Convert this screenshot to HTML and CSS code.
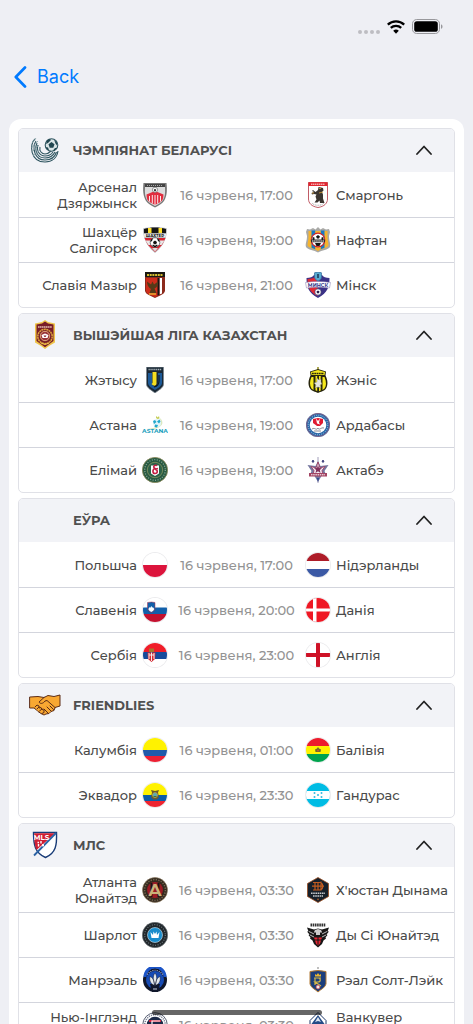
FILE: index.html
```html
<!DOCTYPE html>
<html lang="be">
<head>
  <meta charset="UTF-8">
  <meta name="viewport" content="width=device-width, initial-scale=1.0">
  <title>Матчы</title>
  <link rel="stylesheet" href="styles.css">
</head>
<body>

<div class="screen">

  <!-- Status bar -->
  <div class="status-bar">
    <svg width="22" height="4" viewBox="0 0 22 4" fill="#bdbdc2"><circle cx="2" cy="2" r="2"/><circle cx="8" cy="2" r="2"/><circle cx="14" cy="2" r="2"/><circle cx="20" cy="2" r="2"/></svg>
    <svg class="wifi" width="18" height="14" viewBox="0 0 18 14" fill="none" stroke="#000" stroke-width="2.3"><path d="M.8 4.7a11.8 11.8 0 0 1 16.4 0"/><path d="M3.8 7.9a7.5 7.5 0 0 1 10.4 0"/><path d="M9 13.7 6.2 10.8a4 4 0 0 1 5.6 0z" fill="#000" stroke="none"/></svg>
    <svg width="31" height="15" viewBox="0 0 31 15"><rect x=".5" y=".5" width="27" height="14" rx="4.2" fill="none" stroke="#98989c"/><rect x="2.2" y="2.2" width="23.6" height="10.6" rx="2.6"/><path d="M29 5.2c2 .8 2 3.8 0 4.6z" fill="#98989c"/></svg>
  </div>

  <nav class="nav-bar">
    <a class="back" href="#">
      <svg width="13" height="22" viewBox="0 0 13 22" fill="none" stroke="#007aff" stroke-width="2.7" stroke-linecap="round" stroke-linejoin="round"><path d="M11 1.5 1.8 11 11 20.5"/></svg>
      Back
    </a>
  </nav>

  <main class="leagues">

    <!-- Беларусь -->
    <section class="league">
      <button class="league-header" type="button">
        <svg class="league-logo" viewBox="0 0 32 32" fill="none" stroke="#2f5560">
          <path d="M6 5C0 10 1 28 16 28c7 0 12-4 13-11" stroke-width="1.1"/>
          <path d="M7 7C3 13 5 26 16 26c6 0 10-3 11.500-8" stroke-width="1.1"/>
          <path d="M8 9c-3 7 0 15 8 15 5 0 8-2 10-6" stroke-width="1.1"/>
          <path d="M9 11c-2 6 2 11 7 11 4 0 6-1 8-4" stroke-width="1.1"/>
          <path d="M11 13c-1 4 2 7 5 7 3 0 4-1 6-3" stroke-width="1.1"/>
          <path d="M3 9 7 4M2.500 14 9 7M3 18l7-7M4 22l7-6" stroke="#7f9ba1" stroke-width=".8"/>
          <circle cx="22.500" cy="11" r="6.300" fill="#d9e4e6" stroke-width="1.1"/>
          <path d="m22.500 8 3 2.200-1.200 3.500h-3.600l-1.200-3.500zM18 6l3-1 1 1-3 3-2 1zM25 5.500l3 3v3l-1.500-2zM17 13l2 .5 1 2.500-2-.5zM26 14l2 0-3 3-1-.5z" fill="#214650" stroke="none"/>
        </svg>
        <span class="league-name">ЧЭМПІЯНАТ БЕЛАРУСІ</span>
        <svg class="chevron" viewBox="0 0 16 10"><path d="M1 9l7-7.500L15 9"/></svg>
      </button>
      <ul class="matches">
        <li class="match">
          <span class="home">Арсенал Дзяржынск</span>
          <svg class="badge" viewBox="0 0 26 26"><path d="M1.500 1h23c.8 7 .5 13-2.500 18-2 3-6 5-9 6.500C10 24 6 22 4 19 1 14 .7 8 1.500 1z" fill="#777"/><path d="M3 5h20c.3 6 0 10-2 13-2 3-5 4.500-8 6-3-1.500-6-3-8-6-2-3-2.300-7-2-13z" fill="#ddd"/><path d="M3 2h20v3H3z" fill="#444"/><path d="M5 3.500h16" stroke="#aaa" stroke-width="1" stroke-dasharray="1 1"/><path d="M4.500 12.500 13 9l8.500 3.500c0 4-1 6-3 7.500L13 23l-5.500-3c-2-1.500-3-3.500-3-7.500z" fill="#e12d3e"/><path d="M7.500 14v5.500M10.300 13v8.500M13 13v10M15.700 13v8.500M18.500 14v5.500" stroke="#fff" stroke-width=".9"/><circle cx="13" cy="7.800" r="2.600" fill="#fff" stroke="#555" stroke-width=".6"/><path d="m13 6.800 1.200.9-.5 1.500h-1.400l-.5-1.500z" fill="#333"/></svg>
          <time class="kickoff">16 чэрвеня, 17:00</time>
          <svg class="badge" viewBox="0 0 26 26"><path d="M3.500.5h19V17c0 4-3 7.500-9.500 8.500C6.500 24.500 3.500 21 3.500 17z" fill="#fff" stroke="#b94a55" stroke-width=".9"/><path d="M3.500.3h19V4h-19z" fill="#e2262f"/><path d="M6 2.200h14" stroke="#fff" stroke-width=".9" stroke-dasharray="1.500 .5"/><path d="m13 8 .5-3 2.500.5 2 .5.500 2.500-1.500 1.500 1 2.500 0 4 1.500 4.500H15l-.5-2.500-2 2H9.500l2-3-1-3 1-2-2.500-.5-2 .5-.5-1.500 2.500-1L7 9l1-1 2.500 2z" fill="#3a3530"/><path d="M14 6.500h2M14 11l4-1M7 11h2" stroke="#d8a23a" stroke-width=".8"/><path d="M7 21c2 3 10 3 12 0" stroke="#aaa" fill="none" stroke-dasharray="1 .7"/></svg>
          <span class="away">Смаргонь</span>
        </li>
        <li class="match">
          <span class="home">Шахцёр Салігорск</span>
          <svg class="badge" viewBox="0 0 26 26"><path d="M1 1.500C8-.5 18-.5 25 1.500 25 9 23 18 13 26 3 18 1 9 1 1.500z" fill="#bcbec2"/><path d="M2 2C9 0 17 0 24 2v4.500H2z" fill="#161616"/><path d="M6 1h3.500v5H6zM16.500 1H20v5h-3.500z" fill="#ffe22d"/><path d="M2 6.500h22l-.5 3.500h-21z" fill="#f4f4f4"/><text x="13" y="9.700" font-size="4" font-weight="700" text-anchor="middle">ШАХТЕР</text><path d="M2.500 11h21L20 18l-7 7-7-7z" fill="#d8232f"/><path d="M3.500 13.500h19L19.500 18h-13z" fill="#e9e9e9"/><circle cx="13" cy="15.500" r="4.800" fill="#fff" stroke="#222" stroke-width=".6"/><path d="m13 13.500 2 1.500-.8 2.200h-2.400L11 15zM9 12.500l2-1-1 2.500-1.500 1zM17 12.500l-2-1 1 2.500 1.500 1zM10 18l2 2h2l2-2-1.500-.2-1.500 1-1.500-1z" fill="#111"/><path d="M10 21h6l-3 3.500z" fill="#ddd"/></svg>
          <time class="kickoff">16 чэрвеня, 19:00</time>
          <svg class="badge" viewBox="0 0 26 26"><path d="M2 2l3 .5L8 1l2.500 1.500L13 0l2.500 2.500L18 1l3 1.500 3-.5 1 3-1 4c0 5 2 8 1 11-2 3-8 3-12 5.500C9 23 3 23 1 20c-1-3 1-6 1-11L1 5z" fill="#a9a9a6"/><path d="M3.500 4h19v6c0 4 1.500 7 .8 9-2 2.500-7 2.500-10.300 5-3.300-2.500-8.300-2.500-10.300-5C2 17 3.500 14 3.500 10z" fill="#f6b42d"/><path d="M6.500 3.500h3.700v18.700l-3.700-1.500zM15.800 3.500h3.700v17.200l-3.700 1.500z" fill="#1879c4"/><circle cx="13" cy="13" r="6.800" fill="#fff" stroke="#cf252d" stroke-width="1.200"/><path d="m13 8 2 1.500-1 2h-2l-1-2zM7.500 10l2 .5v3h-2zM18.500 10l-2 .5v3h2zM10 16h6l-1.500 3h-3z" fill="#161616"/><path d="M6 12.500h14v2.800H6z" fill="#2d2929"/><path d="M7 14h12" stroke="#fff" stroke-dasharray="1.500 .6"/></svg>
          <span class="away">Нафтан</span>
        </li>
        <li class="match">
          <span class="home">Славія Мазыр</span>
          <svg class="badge" viewBox="0 0 26 26"><path d="M3 0h20v19c-1 4-6 4.500-10 7-4-2.500-9-3-10-7z" fill="#8c2a1c"/><path d="M3 0h20v5H3z" fill="#1b1812"/><path d="M5 3h16" stroke="#d5bd2e" stroke-width="2" stroke-dasharray="2 .7"/><path d="M4 6h14v17l-5 2c-4-2-8-2.500-9-6z" fill="#ce2d1b"/><path d="M17.500 6H20v15.500l-2.500 1z" fill="#fff"/><path d="M15.500 6h2v17l-2 .8z" fill="#151515"/><path d="M5 9.500l4 3 1.500-3 1.500 3 4-3c0 4-1 6-3.500 7l2 4.500H7.500l1.500-4c-2.500-1.500-4-4-4-7.500z" fill="#553a18"/><path d="M7 22h7" stroke="#e8ad31" stroke-width="1.500"/></svg>
          <time class="kickoff">16 чэрвеня, 21:00</time>
          <svg class="badge" viewBox="0 0 26 26"><path d="M1.500 6C5 6 8 5 9 3h8c1 2 4 3 7.500 3 0 9-2 15-11.500 20C3.500 21 1.500 15 1.500 6z" fill="#3b3287"/><path d="M2.500 7C6 7 9 6 12.500 4v20C4.500 20 2.500 15 2.500 7z" fill="#e02a35"/><path d="M9.500.8Q13-1 16.500.8V5c0 2-2 3.500-3.500 4-1.500-.5-3.500-2-3.500-4z" fill="#58aad0" stroke="#356b9b" stroke-width=".7"/><path d="M12 2h2v4h-2z" fill="#275275"/><path d="M.5 10.500c8-1.500 17-1.500 25 0l-1 5.500c-7-1-16-1-23 0z" fill="#fff" stroke="#8278ac" stroke-width=".5"/><text x="13" y="15" font-size="5" font-weight="700" text-anchor="middle" fill="#34398b">МИНСК</text><circle cx="13" cy="20" r="3.200" fill="#fff" stroke="#25204f" stroke-width=".6"/><path d="m13 18.500 1.500 1-.5 1.700h-2l-.5-1.700z" fill="#25204f"/></svg>
          <span class="away">Мінск</span>
        </li>
      </ul>
    </section>

    <!-- Казахстан -->
    <section class="league">
      <button class="league-header" type="button">
        <svg class="league-logo" viewBox="0 0 32 32"><path d="M16 1l3 2 7 1.500v19L20 27l-4 3-4-3-6-3.500v-19L13 3z" fill="#efc54a"/><path d="M16 2.500 19 4.500l5.500 1V22L19 26l-3 2.300L13 26l-5.500-4V5.500l5.500-1z" fill="#781d28"/><path d="M9 8h14" stroke="#e4bcb0" stroke-width="1.500" stroke-dasharray="1.500 .4"/><circle cx="16" cy="17.500" r="7.200" fill="none" stroke="#dfa83c" stroke-width="1.500" stroke-dasharray="2 .5"/><circle cx="16" cy="17" r="4.700" fill="#98343a" stroke="#f3c58a" stroke-width=".8"/><path d="m12.500 16 3.500-1.500 3.500 1.500-1 3h-5z" fill="#fff"/><path d="M14.500 16.500h3l-1 1.500h-1z" fill="#8b2630"/><path d="M12 24q4 3 8 0" fill="none" stroke="#efc54a"/></svg>
        <span class="league-name">ВЫШЭЙШАЯ ЛІГА КАЗАХСТАН</span>
        <svg class="chevron" viewBox="0 0 16 10"><path d="M1 9l7-7.500L15 9"/></svg>
      </button>
      <ul class="matches">
        <li class="match">
          <span class="home">Жэтысу</span>
          <svg class="badge" viewBox="0 0 26 26"><path d="M4.500 0h17v17c0 4-5 6-8.500 9-3.500-3-8.500-5-8.500-9z" fill="#192835" stroke="#7c8790" stroke-width=".8"/><path d="M6.500 2.500h13" stroke="#a8b2b8" stroke-width="1.600" stroke-dasharray="1.300 .6"/><path d="M6 6h4v9c0 6 6 6 6 0V6h4v10c0 3-4 5-7 7-3-2-7-4-7-7z" fill="#1c5a98"/><path d="M10.500 5h4v12c-1 2.500-3 2-5 0l1-1z" fill="#f3df21"/><path d="M12 20c4-1 5-3 5-6V8" fill="none" stroke="#0d1922" stroke-width="1.200"/></svg>
          <time class="kickoff">16 чэрвеня, 17:00</time>
          <svg class="badge" viewBox="0 0 26 26"><path d="M13 0v3" stroke="#a7a144" stroke-width="1.800"/><path d="M5 4.500 13 2l8 2.500-.5 4c2 4 3 9 .5 13-2 3-5 3-8 4.500-3-1.500-6-1.500-8-4.500-2.500-4-1.500-9 .5-13z" fill="#28260d"/><path d="M6 5l7-2 7 2-.5 3h-13z" fill="#f6e91d"/><path d="M7 6.500h12" stroke="#29260a" stroke-width="1.500" stroke-dasharray="1.800 .5"/><path d="M6.500 10h2v13l-2-1.500c-2-3-2-7 0-11.500zM10.500 9h1.700v15l-1.700-.7zM14 9h1.700v14.500l-1.700.7zM17.500 10h2c2 5 2 9 0 11.500l-2 1.500z" fill="#f6e91d"/><path d="m12 11 2 2 2-1 0 3 1 2-2 1 1 3-3-1-3 1 1-3-2-2 3-1z" fill="#e5e5df" stroke="#77755f" stroke-width=".4"/></svg>
          <span class="away">Жэніс</span>
        </li>
        <li class="match">
          <span class="home">Астана</span>
          <svg class="badge" viewBox="0 0 26 26"><path d="m14 6 .3-2 1.500 1.500L17 4l.5 2.500-2 .5z" fill="#c4cc54"/><path d="M18 6c5 5 2 9-6 11H5c9-1 15-3 13-11z" fill="#dae8bf"/><circle cx="15" cy="11" r="4" fill="#e1f5fa"/><path d="m11 9 2-1 1.500 2L12 12zM15 9.500l2.500-2 1 2-1.500 2zM13 12.500l3 .5-1 2.500-2.500-.5z" fill="#22a8cc"/><text x="13" y="21" font-size="6" font-weight="700" text-anchor="middle" fill="#1ba0bd">ASTANA</text></svg>
          <time class="kickoff">16 чэрвеня, 19:00</time>
          <svg class="badge" viewBox="0 0 26 26"><circle cx="13" cy="13" r="12" fill="#2767a8"/><circle cx="13" cy="13" r="11.500" fill="none" stroke="#c05c70" stroke-width=".6"/><circle cx="13" cy="13" r="9.800" fill="none" stroke="#b4cbe4" stroke-width="1" stroke-dasharray="1 1.200"/><circle cx="13" cy="13" r="8.300" fill="#fff"/><path d="m8 7 5-1 5 1 0 4-3 3h-3l-4-3z" fill="#df1c33"/><path d="m11 6.500 2 2.500 2-2.500-1 4 1 2-3-1z" fill="#fff"/><path d="M7 17c3-2 4 2 6-1 1 3 3-1 6 0M9 19h7" stroke="#6d707e" stroke-width=".8" fill="none"/></svg>
          <span class="away">Ардабасы</span>
        </li>
        <li class="match">
          <span class="home">Елімай</span>
          <svg class="badge" viewBox="0 0 26 26"><circle cx="13" cy="13" r="12.600" fill="#285a42" stroke="#8a8755" stroke-width=".8"/><circle cx="13" cy="13" r="10.300" fill="none" stroke="#8aa893" stroke-width="1.300" stroke-dasharray="1 1.500"/><circle cx="13" cy="13" r="7.700" fill="#2c6248" stroke="#a9a66b" stroke-width=".6"/><path d="M9 8.500h8v8l-4 2.500-4-2.500z" fill="#fff"/><path d="M15 8.500c-3-1-4.500 1.500-2 3-3 1-2.500 5 0 5 3 0 3-4 0-4l3-1" fill="none" stroke="#c41f42" stroke-width="1.600"/></svg>
          <time class="kickoff">16 чэрвеня, 19:00</time>
          <svg class="badge" viewBox="0 0 26 26"><path d="M13 0v26" stroke="#8b87a8" stroke-width=".8"/><path d="m13 4 2.500 5 8-1-4 6 2 5-5 0-3.500 6-3.500-6-5 0 2-5-4-6 8 1z" fill="#75779f"/><path d="m13 5 2 6 5-1.500-3 4 1 5H8l1-5-3-4L11 11z" fill="#f3edf3" stroke="#9b3459" stroke-width=".8"/><path d="m13 8 1 3 3 .3-2.200 1.700.7 3-2.500-1.700-2.500 1.700.7-3L9 11.300l3-.3z" fill="#82305a"/><path d="M4 16h18v3.500H4z" fill="#a34463"/><path d="M6 17.800h14" stroke="#fff" stroke-dasharray="1.500 .7"/><path d="m8 3 1 2-2 0zM18 3l1 2-2 0z" fill="#40437e" stroke="#40437e"/><path d="M12 21h2l-1 4z" fill="#284590"/></svg>
          <span class="away">Актабэ</span>
        </li>
      </ul>
    </section>

    <!-- Еўра -->
    <section class="league">
      <button class="league-header" type="button">
        <span class="league-logo"></span>
        <span class="league-name">ЕЎРА</span>
        <svg class="chevron" viewBox="0 0 16 10"><path d="M1 9l7-7.500L15 9"/></svg>
      </button>
      <ul class="matches">
        <li class="match">
          <span class="home">Польшча</span>
          <svg class="badge flag" viewBox="0 0 24 24"><path d="M0 0h24v12H0z" fill="#fff"/><path d="M0 12h24v12H0z" fill="#dc143c"/></svg>
          <time class="kickoff">16 чэрвеня, 17:00</time>
          <svg class="badge flag" viewBox="0 0 24 24"><path d="M0 0h24v8H0z" fill="#ae1c28"/><path d="M0 8h24v8H0z" fill="#fff"/><path d="M0 16h24v8H0z" fill="#3b59a5"/></svg>
          <span class="away">Нідэрланды</span>
        </li>
        <li class="match">
          <span class="home">Славенія</span>
          <svg class="badge flag" viewBox="0 0 24 24"><path d="M0 0h24v9.500H0z" fill="#fff"/><path d="M0 9.500h24V16H0z" fill="#1260aa"/><path d="M0 16h24v8H0z" fill="#c4112f"/><path d="M4.500 4.500q4-1 7.500 0v6c0 2-2 3.500-3.700 4-1.800-.5-3.800-2-3.800-4z" fill="#1260aa" stroke="#b5304b" stroke-width=".5"/><path d="m5.300 11 1.500-2 .7.800.8-2 .8 2 .7-.8 1.500 2c-.5 1.500-2 2.500-3 3-1-.5-2.500-1.500-3-3z" fill="#fff"/></svg>
          <time class="kickoff">16 чэрвеня, 20:00</time>
          <svg class="badge flag" viewBox="0 0 24 24"><path d="M0 0h24v24H0z" fill="#ef1824"/><path d="M7 0h3.500v24H7zM0 10.500h24v3H0z" fill="#fff"/></svg>
          <span class="away">Данія</span>
        </li>
        <li class="match">
          <span class="home">Сербія</span>
          <svg class="badge flag" viewBox="0 0 24 24"><path d="M0 0h24v9H0z" fill="#f01d29"/><path d="M0 9h24v7H0z" fill="#174b9b"/><path d="M0 16h24v8H0z" fill="#fff"/><path d="M6 5.500h5V9H6z" fill="#a5772e"/><path d="M4.500 9.500h8l-.5 6.500-3.500 3-3.500-3z" fill="#d62932"/><path d="M6 10v6M8.500 9.500V18M11 10v6M6 12h5" stroke="#eee" stroke-width="1"/></svg>
          <time class="kickoff">16 чэрвеня, 23:00</time>
          <svg class="badge flag" viewBox="0 0 24 24"><path d="M0 0h24v24H0z" fill="#fff"/><path d="M10 0h4v24h-4zM0 10h24v4H0z" fill="#ce1126"/></svg>
          <span class="away">Англія</span>
        </li>
      </ul>
    </section>

    <!-- Таварыскія -->
    <section class="league">
      <button class="league-header" type="button">
        <svg class="league-logo" viewBox="0 0 32 32" stroke="#5c2c16" stroke-width="1" stroke-linejoin="round" stroke-linecap="round"><path d="M1 8l8-.5 6 1 4-2 6 1 6-1.500v11l-5 1.500-1 3-3 1-2 2-3 .5-2 1-3-1.500-3-2-2-2-2-1.500H1z" fill="#f9a832"/><path d="M15 8.500 10 13c1 2 4 2 6-1l2-.5 8 7M21 17l3.500 3.500M18 18l4 4M15 20l4 4M6 18l2-2 2 1 0 2 2-.5 1 2 2 .5 0 2.500-2 1M8 20l2-2M10.500 22 13 20" fill="none"/></svg>
        <span class="league-name">FRIENDLIES</span>
        <svg class="chevron" viewBox="0 0 16 10"><path d="M1 9l7-7.500L15 9"/></svg>
      </button>
      <ul class="matches">
        <li class="match">
          <span class="home">Калумбія</span>
          <svg class="badge flag" viewBox="0 0 24 24"><path d="M0 0h24v12H0z" fill="#fff200"/><path d="M0 12h24v6H0z" fill="#205aaa"/><path d="M0 18h24v6H0z" fill="#ec2033"/></svg>
          <time class="kickoff">16 чэрвеня, 01:00</time>
          <svg class="badge flag" viewBox="0 0 24 24"><path d="M0 0h24v8H0z" fill="#ed1c2c"/><path d="M0 8h24v8H0z" fill="#fff200"/><path d="M0 16h24v8H0z" fill="#00a34d"/><path d="m12 9 1 1.500 2 1-.5 2.500h-5L9 11.500l2-1z" fill="#6d6b2b"/><circle cx="12" cy="12.500" r="1" fill="#c35a31"/></svg>
          <span class="away">Балівія</span>
        </li>
        <li class="match">
          <span class="home">Эквадор</span>
          <svg class="badge flag" viewBox="0 0 24 24"><path d="M0 0h24v12H0z" fill="#fff200"/><path d="M0 12h24v6H0z" fill="#0b5ca8"/><path d="M0 18h24v6H0z" fill="#ee2430"/><path d="m8 7 4 1 4-1-1 2.500 1 4.500-2 2.500h-4L8 14l1-4.500z" fill="#6b5a2d"/><circle cx="12" cy="12" r="2.500" fill="#59a9b6" stroke="#d8b338" stroke-width=".6"/><path d="M10.500 13.500h3" stroke="#39763c"/></svg>
          <time class="kickoff">16 чэрвеня, 23:30</time>
          <svg class="badge flag" viewBox="0 0 24 24"><path d="M0 0h24v24H0z" fill="#00bce4"/><path d="M0 8h24v8H0z" fill="#fff"/><g fill="#31bce0"><circle cx="12" cy="12" r="1"/><circle cx="8.500" cy="10" r="1"/><circle cx="15.500" cy="10" r="1"/><circle cx="8.500" cy="14" r="1"/><circle cx="15.500" cy="14" r="1"/></g></svg>
          <span class="away">Гандурас</span>
        </li>
      </ul>
    </section>

    <!-- МЛС -->
    <section class="league">
      <button class="league-header" type="button">
        <svg class="league-logo" viewBox="0 0 32 32"><path d="M4.500 3.500h23C28 16 27 24 16.500 28.500 6 24 4.500 16 4.500 3.500z" fill="#fff" stroke="#183b77" stroke-width="1.400"/><path d="M5.200 4.200h21L7.500 21C5.500 17 5.200 11 5.200 4.200z" fill="#cf1f34"/><path d="M27 4 5 26.500" stroke="#2a62a5" stroke-width="1.800"/><text x="12.500" y="10.500" font-size="7" font-weight="700" text-anchor="middle" fill="#fff">MLS</text><path d="M12 12v2.500M9.500 15v2.500M14 15v2.500M8.500 13.500h1.500M13 16.200h2" stroke="#fff" stroke-width="1.400"/></svg>
        <span class="league-name">МЛС</span>
        <svg class="chevron" viewBox="0 0 16 10"><path d="M1 9l7-7.500L15 9"/></svg>
      </button>
      <ul class="matches">
        <li class="match">
          <span class="home">Атланта Юнайтэд</span>
          <svg class="badge" viewBox="0 0 26 26"><circle cx="13" cy="13" r="12.500" fill="#33291f" stroke="#8d795a" stroke-width=".6"/><circle cx="13" cy="13" r="10.400" fill="none" stroke="#75664f" stroke-width="1.500" stroke-dasharray="1.300 1.300"/><circle cx="13" cy="13" r="8" fill="#9c1b25"/><path d="M9.500 6v14M16.500 6v14" stroke="#181515" stroke-width="2"/><text x="13" y="19" font-size="17" font-weight="700" text-anchor="middle" fill="#c9b07a">A</text></svg>
          <time class="kickoff">16 чэрвеня, 03:30</time>
          <svg class="badge" viewBox="0 0 26 26"><path d="m13 .5 10.500 6v13L13 25.500l-10.500-6v-13z" fill="#17202a" stroke="#9b4d20" stroke-width=".8"/><path d="M8 5.500h6c5 0 5 7.500 0 7.500H8M10 5v8M13 5v8M7 9.200h12M16 4.500v9" fill="none" stroke="#c35c20" stroke-width="1.200"/><path d="M6 16.300h14M8 19h10" stroke="#c5c9cd" stroke-width="1.400" stroke-dasharray="1.600 .6"/><path d="m13 21 .7 1.500-.7 1-.7-1z" fill="#e0702c"/></svg>
          <span class="away">Х'юстан Дынама</span>
        </li>
        <li class="match">
          <span class="home">Шарлот</span>
          <svg class="badge" viewBox="0 0 26 26"><circle cx="13" cy="13" r="12.700" fill="#20262a" stroke="#737b80" stroke-width=".6"/><circle cx="13" cy="13" r="10.300" fill="none" stroke="#6d777d" stroke-width="1.200" stroke-dasharray="1 1.500"/><circle cx="13" cy="13" r="7.500" fill="#1b8dcc" stroke="#d8eaf3" stroke-width=".6"/><path d="m8.500 10 2.500 3 .5-3.500 1.500 2.500 1.500-2.500.5 3.500 2.500-3-1 6h-7z" fill="#fff"/></svg>
          <time class="kickoff">16 чэрвеня, 03:30</time>
          <svg class="badge" viewBox="0 0 26 26"><path d="M5.500 3h15" stroke="#333" stroke-width="3" stroke-dasharray="1.600 .6"/><path d="m2 5.500 7 2 4-1 4 1 7-2-1.500 4 1.500 0-2.500 3 1 .5-2 2.500.5 1-2.500 2L17 22l-4 3.500L9 22l-1.500-3.500-2.500-2 .5-1-2-2.500 1-.5L2 9.500l1.500 0z" fill="#171717"/><path d="m10 8 3-1 3 1 1 2-1 1-1-1v3h-4v-3l-1 1-1-1z" fill="#ccc"/><path d="M4 9.500 9 12M5 13l4 2M22 9.500 17 12M21 13l-4 2" stroke="#fff" stroke-width=".7"/><path d="M9 15.500h8l-1 3-1 3-2 2.500-2-2.500-1-3z" fill="#e52834"/><path d="M8 18h10M13 15v9" stroke="#171717"/></svg>
          <span class="away">Ды Сі Юнайтэд</span>
        </li>
        <li class="match">
          <span class="home">Манрэаль</span>
          <svg class="badge" viewBox="0 0 26 26"><circle cx="13" cy="13" r="12" fill="#10172b"/><circle cx="13" cy="13" r="9" fill="#164bb5"/><path d="M3 10a10 10 0 0 1 20 0" fill="none" stroke="#1c55c8" stroke-width="3"/><path d="M5 7.500Q13-1 21 7.500" fill="none" stroke="#a7b6e0" stroke-width="1.200" stroke-dasharray="1 1.200"/><path d="M8 17h10l-2 8h-6z" fill="#10172b"/><path d="M13 6c2.500 3.500 2 7 0 12-2-5-2.500-8.500 0-12zM8 9.500c2.500 1 4 3 4.500 9C9 17 7 14 8 9.500zM18 9.500c-2.500 1-4 3-4.500 9C17 17 19 14 18 9.500z" fill="#e4e9ed" stroke="#10172b" stroke-width=".5"/><path d="M11 22h4" stroke="#c4cbda" stroke-width="1.200"/></svg>
          <time class="kickoff">16 чэрвеня, 03:30</time>
          <svg class="badge" viewBox="0 0 26 26"><circle cx="13" cy="1" r="1" fill="#aaa"/><path d="M5 4.500q8-2 16 0V17c-1 4-5 5-8 8-3-3-7-4-8-8z" fill="#1b3e7c" stroke="#b37b34" stroke-width="1"/><path d="M10 7l1.500 1L13 6l1.500 2L16 7v2.500h-6z" fill="#e8b534"/><path d="M10 18v-7h3c3 0 3 4 0 4h-3l6 4M9 11l7 0" fill="none" stroke="#d2b648" stroke-width="1.200"/><circle cx="13" cy="20" r="2" fill="#f3e9e6" stroke="#bd3444" stroke-width=".7"/></svg>
          <span class="away">Рэал Солт-Лэйк</span>
        </li>
        <li class="match">
          <span class="home">Нью-Інглэнд Рэвалюшн</span>
          <svg class="badge" viewBox="0 0 26 26"><circle cx="13" cy="13" r="12.300" fill="#fff" stroke="#303950" stroke-width=".8"/><circle cx="13" cy="13" r="10.300" fill="none" stroke="#777e93" stroke-width="1.500" stroke-dasharray="1.200 1"/><circle cx="13" cy="13" r="8.300" fill="#1b2948"/><path d="M7 9h12M7 13h12" stroke="#ce253f" stroke-width="2"/><path d="M10 18V9l8 0M11 13h5" stroke="#fff" stroke-width="1.200" fill="none"/></svg>
          <time class="kickoff">16 чэрвеня, 03:30</time>
          <svg class="badge" viewBox="0 0 26 26"><path d="m13 .5 8 8v11L13 25.500l-8-6v-11z" fill="#fff" stroke="#1a3567"/><path d="m13 3 8 11v4l-4-5-4 6-4-6-4 5v-4z" fill="#244b87"/><path d="m13 5 3 5-3-1-3 1z" fill="#dce5f0"/></svg>
          <span class="away">Ванкувер Уайткэпс</span>
        </li>
      </ul>
    </section>

  </main>

  <div class="home-indicator"></div>
</div>

</body>
</html>
```
FILE: styles.css
```css
* {
  box-sizing: border-box;
}

body {
  margin: 0;
  background: #eeeff4;
  color: #4a4a4a;
  font-family: Montserrat, Inter, "Noto Sans", sans-serif;
}

.screen {
  position: relative;
  height: 100vh;
  overflow: hidden;
}

.status-bar {
  display: flex;
  justify-content: flex-end;
  align-items: flex-end;
  height: 34px;
  padding-right: 30px;
}

.status-bar .wifi {
  margin: 0 7px;
}

.nav-bar {
  display: flex;
  align-items: center;
  height: 85px;
  padding-left: 14px;
}

.back {
  display: flex;
  align-items: center;
  gap: 10px;
  color: #007aff;
  font-family: Inter, sans-serif;
  font-size: 18px;
  line-height: 22px;
  text-decoration: none;
}

.leagues {
  display: flex;
  flex-direction: column;
  gap: 5px;
  margin: 0 9px;
  padding: 9px;
  background: #fff;
  border-radius: 12px;
}

.league {
  border: 1px solid #e0e1e7;
  border-radius: 5px;
  overflow: hidden;
}

.league-header {
  display: flex;
  align-items: center;
  width: 100%;
  height: 43px;
  padding: 0 22px 2px 10px;
  background: #f2f3f7;
  border: 0;
  color: #505050;
  font: inherit;
  cursor: pointer;
}

.league-logo {
  width: 32px;
  height: 32px;
}

.league-name {
  flex: 1;
  margin-left: 12px;
  font-size: 13px;
  font-weight: 700;
  line-height: 18px;
  text-align: left;
}

.chevron {
  width: 16px;
  height: 10px;
  fill: none;
  stroke: #222;
  stroke-width: 1.8;
  stroke-linecap: round;
  stroke-linejoin: round;
}

.matches {
  margin: 0;
  padding: 0;
  list-style: none;
}

.match {
  display: grid;
  grid-template-columns: 1fr 26px 137px 26px 1fr;
  align-items: center;
  height: 45px;
  font-size: 13px;
  font-weight: 500;
  line-height: 16px;
}

.match + .match {
  border-top: 1px solid #d3d5dd;
}

.home {
  padding: 0 5px 0 14px;
  text-align: right;
}

.away {
  padding-left: 5px;
}

.kickoff {
  color: #939393;
  text-align: center;
}

.badge {
  width: 26px;
  height: 26px;
}

.flag {
  width: 24px;
  height: 24px;
  justify-self: center;
  border-radius: 50%;
  box-shadow: 0 0 0 1px #ececee;
}

.home-indicator {
  position: absolute;
  bottom: 9px;
  left: 50%;
  width: 170px;
  height: 5px;
  margin-left: -85px;
  background: rgba(0, 0, 0, 0.6);
  border-radius: 3px;
}
```
